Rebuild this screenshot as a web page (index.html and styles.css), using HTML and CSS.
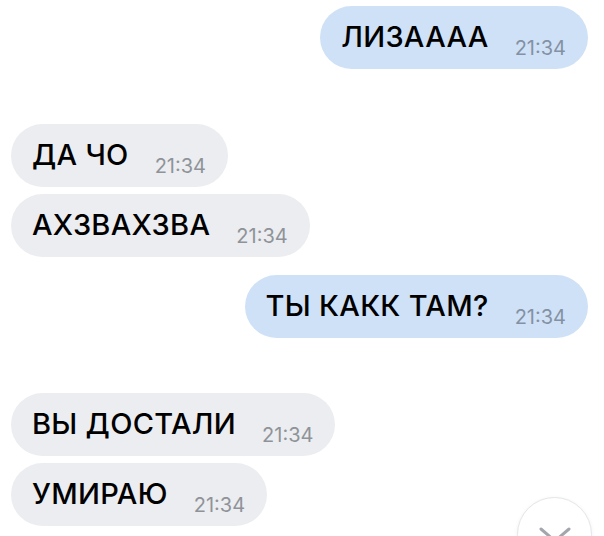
FILE: index.html
```html
<!DOCTYPE html>
<html lang="ru">
<head>
  <meta charset="UTF-8" />
  <meta name="viewport" content="width=device-width, initial-scale=1.0" />
  <title>Чат</title>
  <link rel="stylesheet" href="styles.css">
</head>
<body>
  <div class="chat">
    <div class="row out first">
      <div class="bubble">ЛИЗАААА <span class="time">21:34</span></div>
    </div>

    <div class="row in group">
      <div class="bubble">ДА ЧО <span class="time">21:34</span></div>
    </div>
    <div class="row in">
      <div class="bubble">АХЗВАХЗВА <span class="time">21:34</span></div>
    </div>

    <div class="row out near">
      <div class="bubble">ТЫ КАКК ТАМ? <span class="time">21:34</span></div>
    </div>

    <div class="row in group">
      <div class="bubble">ВЫ ДОСТАЛИ <span class="time">21:34</span></div>
    </div>
    <div class="row in">
      <div class="bubble">УМИРАЮ <span class="time">21:34</span></div>
    </div>

    <button class="scroll-down" type="button" aria-label="Вниз">
      <svg width="34" height="20" viewBox="0 0 34 20">
        <path d="M3 3 L17 15 L31 3" fill="none" stroke="#a3a7ad" stroke-width="3" stroke-linecap="round" stroke-linejoin="round"/>
      </svg>
    </button>
  </div>
</body>
</html>
```

FILE: styles.css
```css
html, body {
  margin: 0;
  padding: 0;
  background: #fff;
}
body {
  font-family: Inter, "Noto Sans", "Liberation Sans", sans-serif;
}
.chat {
  position: relative;
  height: 536px;
  overflow: hidden;
  padding: 0 16px 0 11px;
  display: flex;
  flex-direction: column;
  gap: 7px;
}
.row {
  display: flex;
}
.row.out {
  justify-content: flex-end;
}
.row.first {
  margin-top: 6px;
}
.row.group {
  margin-top: 48px;
}
.row.near {
  margin-top: 11px;
}
.bubble {
  box-sizing: border-box;
  height: 63px;
  padding: 17px 22px 0 21px;
  border-radius: 32px;
  font-size: 29px;
  line-height: 28px;
  font-weight: 550;
  letter-spacing: 0.3px;
  color: #000;
  white-space: nowrap;
}
.out .bubble {
  background: #cfe1f7;
}
.in .bubble {
  background: #ebedf0;
}
.time {
  display: inline-block;
  margin-left: 18px;
  font-size: 20px;
  line-height: 20px;
  font-weight: 400;
  letter-spacing: 0;
  vertical-align: -8px;
  color: #8f9399;
}
.out .time {
  color: #8491a4;
}
.scroll-down {
  position: absolute;
  left: 517px;
  top: 497px;
  width: 75px;
  height: 75px;
  border-radius: 50%;
  border: 1px solid #e4e6e9;
  background: #fff;
  box-shadow: 0 1px 4px rgba(0, 0, 0, 0.06);
  padding: 28px 0 0;
  display: flex;
  justify-content: center;
  align-items: flex-start;
}
```
